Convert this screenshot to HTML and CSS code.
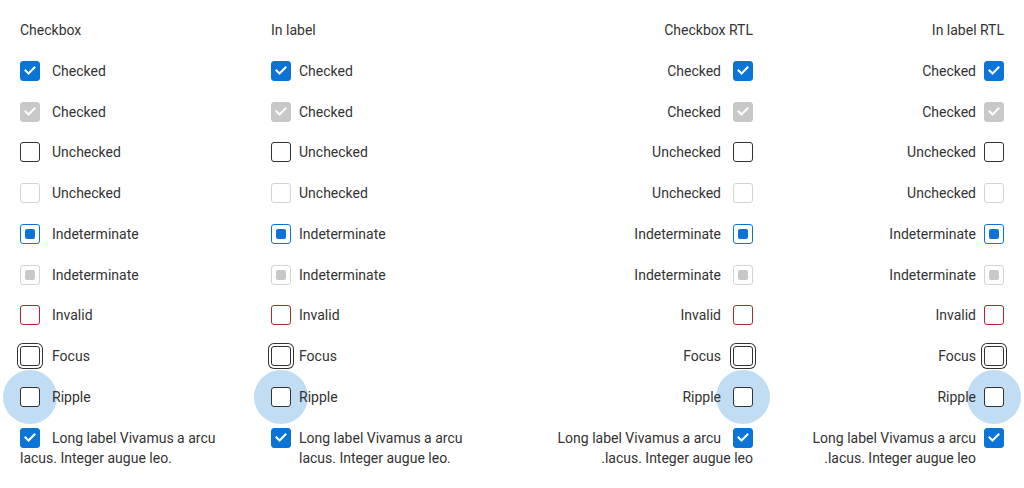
FILE: index.html
```html
<!DOCTYPE html>
<html lang="en">
<head>
<meta charset="utf-8">
<title>Checkbox</title>
<link rel="stylesheet" href="styles.css">
</head>
<body>
<div class="page">
  <div class="col">
    <div class="heading">Checkbox</div>
    <div class="row"><span class="cb checked"><svg viewBox="0 0 20 20"><path d="M5.5 9.5 L8.5 12.5 L14.5 6.5"/></svg></span>Checked</div>
    <div class="row"><span class="cb checked disabled"><svg viewBox="0 0 20 20"><path d="M5.5 9.5 L8.5 12.5 L14.5 6.5"/></svg></span>Checked</div>
    <div class="row"><span class="cb"></span>Unchecked</div>
    <div class="row"><span class="cb disabled"></span>Unchecked</div>
    <div class="row"><span class="cb indet"></span>Indeterminate</div>
    <div class="row"><span class="cb indet disabled"></span>Indeterminate</div>
    <div class="row"><span class="cb invalid"></span>Invalid</div>
    <div class="row"><span class="cb focus"></span>Focus</div>
    <div class="row"><span class="cb ripple"></span>Ripple</div>
    <div class="row"><span class="cb checked"><svg viewBox="0 0 20 20"><path d="M5.5 9.5 L8.5 12.5 L14.5 6.5"/></svg></span>Long label Vivamus a arcu lacus. Integer augue leo.</div>
  </div>
  <div class="col">
    <div class="heading">In label</div>
    <label class="row lbl"><span class="cb checked"><svg viewBox="0 0 20 20"><path d="M5.5 9.5 L8.5 12.5 L14.5 6.5"/></svg></span><span>Checked</span></label>
    <label class="row lbl"><span class="cb checked disabled"><svg viewBox="0 0 20 20"><path d="M5.5 9.5 L8.5 12.5 L14.5 6.5"/></svg></span><span>Checked</span></label>
    <label class="row lbl"><span class="cb"></span><span>Unchecked</span></label>
    <label class="row lbl"><span class="cb disabled"></span><span>Unchecked</span></label>
    <label class="row lbl"><span class="cb indet"></span><span>Indeterminate</span></label>
    <label class="row lbl"><span class="cb indet disabled"></span><span>Indeterminate</span></label>
    <label class="row lbl"><span class="cb invalid"></span><span>Invalid</span></label>
    <label class="row lbl"><span class="cb focus"></span><span>Focus</span></label>
    <label class="row lbl"><span class="cb ripple"></span><span>Ripple</span></label>
    <label class="row lbl"><span class="cb checked"><svg viewBox="0 0 20 20"><path d="M5.5 9.5 L8.5 12.5 L14.5 6.5"/></svg></span><span class="long">Long label Vivamus a arcu lacus. Integer augue leo.</span></label>
  </div>
  <div class="col rtl" dir="rtl">
    <div class="heading">Checkbox RTL</div>
    <div class="row"><span class="cb checked"><svg viewBox="0 0 20 20"><path d="M5.5 9.5 L8.5 12.5 L14.5 6.5"/></svg></span>Checked</div>
    <div class="row"><span class="cb checked disabled"><svg viewBox="0 0 20 20"><path d="M5.5 9.5 L8.5 12.5 L14.5 6.5"/></svg></span>Checked</div>
    <div class="row"><span class="cb"></span>Unchecked</div>
    <div class="row"><span class="cb disabled"></span>Unchecked</div>
    <div class="row"><span class="cb indet"></span>Indeterminate</div>
    <div class="row"><span class="cb indet disabled"></span>Indeterminate</div>
    <div class="row"><span class="cb invalid"></span>Invalid</div>
    <div class="row"><span class="cb focus"></span>Focus</div>
    <div class="row"><span class="cb ripple"></span>Ripple</div>
    <div class="row"><span class="cb checked"><svg viewBox="0 0 20 20"><path d="M5.5 9.5 L8.5 12.5 L14.5 6.5"/></svg></span>Long label Vivamus a arcu lacus. Integer augue leo.</div>
  </div>
  <div class="col rtl" dir="rtl">
    <div class="heading">In label RTL</div>
    <label class="row lbl"><span class="cb checked"><svg viewBox="0 0 20 20"><path d="M5.5 9.5 L8.5 12.5 L14.5 6.5"/></svg></span><span>Checked</span></label>
    <label class="row lbl"><span class="cb checked disabled"><svg viewBox="0 0 20 20"><path d="M5.5 9.5 L8.5 12.5 L14.5 6.5"/></svg></span><span>Checked</span></label>
    <label class="row lbl"><span class="cb"></span><span>Unchecked</span></label>
    <label class="row lbl"><span class="cb disabled"></span><span>Unchecked</span></label>
    <label class="row lbl"><span class="cb indet"></span><span>Indeterminate</span></label>
    <label class="row lbl"><span class="cb indet disabled"></span><span>Indeterminate</span></label>
    <label class="row lbl"><span class="cb invalid"></span><span>Invalid</span></label>
    <label class="row lbl"><span class="cb focus"></span><span>Focus</span></label>
    <label class="row lbl"><span class="cb ripple"></span><span>Ripple</span></label>
    <label class="row lbl"><span class="cb checked"><svg viewBox="0 0 20 20"><path d="M5.5 9.5 L8.5 12.5 L14.5 6.5"/></svg></span><span class="long">Long label Vivamus a arcu lacus. Integer augue leo.</span></label>
  </div>
</div>
</body>
</html>
```

FILE: styles.css
```css
html, body {
  margin: 0;
  padding: 0;
}

body {
  font-family: Roboto, "Liberation Sans", sans-serif;
  font-size: 14px;
  line-height: 20px;
  color: #333;
}

.page {
  position: relative;
  z-index: 0;
  display: grid;
  grid-template-columns: repeat(4, 231px);
  column-gap: 20px;
  padding: 20px;
}

.col {
  display: flex;
  flex-direction: column;
  gap: 20.75px;
}

.heading {
  line-height: 20px;
}

.row {
  line-height: 20px;
}

.cb {
  position: relative;
  display: inline-block;
  box-sizing: border-box;
  width: 20px;
  height: 20px;
  border: 1px solid #333;
  border-radius: 3px;
  background: #fff;
  vertical-align: top;
  margin-inline-end: 12px;
}

.lbl {
  display: flex;
  align-items: flex-start;
}

.lbl .cb {
  flex: none;
  margin-inline-end: 8px;
}

.lbl .long {
  max-width: 200px;
}

.cb svg {
  position: absolute;
  left: -1px;
  top: -1px;
  width: 20px;
  height: 20px;
}

.cb svg path {
  fill: none;
  stroke: #fff;
  stroke-width: 2;
  stroke-linecap: square;
}

.cb.checked {
  background: #0b74d6;
  border-color: #0b74d6;
}

.cb.checked.disabled {
  background: #c8c8c8;
  border-color: #c8c8c8;
}

.cb.disabled {
  border-color: #d4d4d4;
}

.cb.indet {
  border-color: #0b74d6;
}

.cb.indet::after {
  content: "";
  position: absolute;
  left: 4px;
  top: 4px;
  width: 10px;
  height: 10px;
  border-radius: 2px;
  background: #0b74d6;
}

.cb.indet.disabled {
  border-color: #d4d4d4;
}

.cb.indet.disabled::after {
  background: #c8c8c8;
}

.cb.invalid {
  border-color: #b3262c;
}

.cb.focus {
  box-shadow: 0 0 0 2px #fff, 0 0 0 3px #333;
}

.cb.ripple::before {
  content: "";
  position: absolute;
  left: 50%;
  top: 50%;
  width: 54px;
  height: 54px;
  margin: -27px 0 0 -27px;
  border-radius: 50%;
  background: #c0ddf4;
  z-index: -1;
}
```
